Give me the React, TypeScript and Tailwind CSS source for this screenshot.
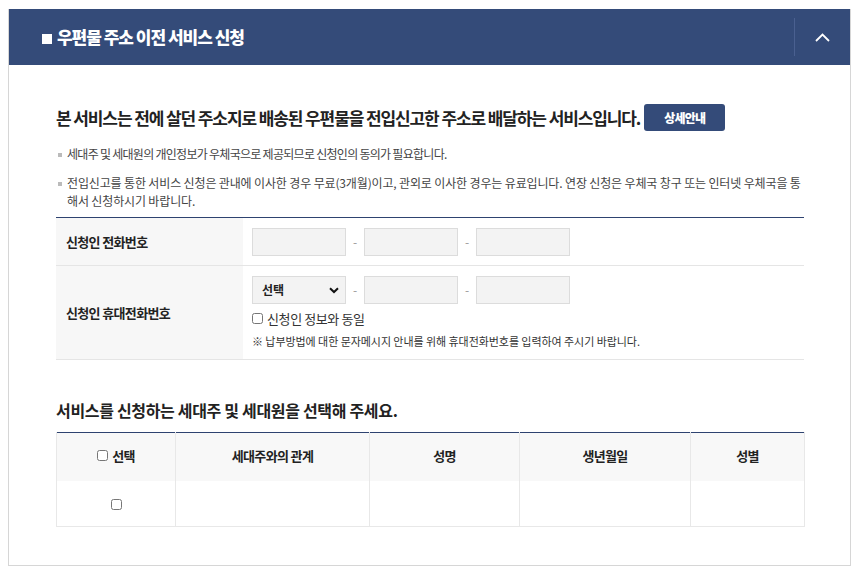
import React from "react";

const font = { fontFamily: '"Noto Sans CJK KR", "Noto Sans", sans-serif' };

function Input() {
  return <div className="w-[94px] h-[28px] bg-[#f3f3f3] border border-[#dcdcdc]" />;
}

function Dash() {
  return <span className="w-[18px] text-center text-[12px] text-[#999]">-</span>;
}

export default function App() {
  return (
    <div className="w-[859px] h-[576px] bg-white pt-[9px] pl-[8px]" style={font}>
      <div className="w-[843px] h-[557px] border border-[#d6d6d6] border-t-0 flex flex-col">
        {/* header */}
        <div className="h-[56px] bg-[#344b79] flex items-center">
          <div className="flex-1 flex items-center pl-[33px] text-white">
            <span className="w-[10px] h-[10px] bg-white mr-[5px] mt-[4px]" />
            <span className="text-[17px] font-black tracking-[-0.06em]">우편물 주소 이전 서비스 신청</span>
          </div>
          <div className="w-px h-[38px] bg-[#4a6090]" />
          <div className="w-[55px] flex items-center justify-center">
            <svg width="15" height="9" viewBox="0 0 15 9" fill="none">
              <path d="M1 8L7.5 1.5L14 8" stroke="white" strokeWidth="1.8" />
            </svg>
          </div>
        </div>

        {/* content */}
        <div className="pl-[47px] pr-[46px] pt-[39px]">
          <div className="flex items-center h-[27px]">
            <h2 className="text-[17px] font-bold text-[#222] tracking-[-0.065em]">
              본 서비스는 전에 살던 주소지로 배송된 우편물을 전입신고한 주소로 배달하는 서비스입니다.
            </h2>
            <button className="ml-[4px] w-[81px] h-[27px] rounded-[3px] bg-[#344b79] text-white text-[12px] font-black tracking-[-0.06em]">
              상세안내
            </button>
          </div>

          <ul className="mt-[14px] text-[12px] text-[#444] leading-[18px]">
            <li className="flex tracking-[-0.06em]">
              <span className="w-[4px] h-[4px] bg-[#bbb] mt-[8px] ml-[2px] mr-[5px] shrink-0" />
              <span>세대주 및 세대원의 개인정보가 우체국으로 제공되므로 신청인의 동의가 필요합니다.</span>
            </li>
            <li className="flex mt-[11px] tracking-[-0.012em]">
              <span className="w-[4px] h-[4px] bg-[#bbb] mt-[8px] ml-[2px] mr-[5px] shrink-0" />
              <span className="whitespace-nowrap">
                전입신고를 통한 서비스 신청은 관내에 이사한 경우 무료(3개월)이고, 관외로 이사한 경우는 유료입니다. 연장 신청은 우체국 창구 또는 인터넷 우체국을 통
                <br />
                해서 신청하시기 바랍니다.
              </span>
            </li>
          </ul>

          {/* form table */}
          <div className="mt-[7px] border-t border-[#2e4370]">
            <div className="flex h-[48px] border-b border-[#e5e5e5]">
              <div className="w-[187px] bg-[#f7f7f7] flex items-center pl-[10px] text-[13px] font-bold text-[#222] tracking-[-0.05em]">
                신청인 전화번호
              </div>
              <div className="flex items-center pl-[9px]">
                <Input />
                <Dash />
                <Input />
                <Dash />
                <Input />
              </div>
            </div>
            <div className="flex h-[94px] border-b border-[#e5e5e5]">
              <div className="w-[187px] bg-[#f7f7f7] flex items-center pl-[10px] text-[13px] font-bold text-[#222] tracking-[-0.05em]">
                신청인 휴대전화번호
              </div>
              <div className="flex flex-col pl-[9px] pt-[10px]">
                <div className="flex items-center">
                  <div className="relative w-[94px] h-[28px] bg-[#f3f3f3] border border-[#dcdcdc] flex items-center pl-[9px] text-[12px] font-bold text-[#222]">
                    선택
                    <svg className="absolute right-[6px] top-[10px]" width="10" height="7" viewBox="0 0 10 7" fill="none">
                      <path d="M1 1.2L5 5L9 1.2" stroke="#111" strokeWidth="2" />
                    </svg>
                  </div>
                  <Dash />
                  <Input />
                  <Dash />
                  <Input />
                </div>
                <label className="flex items-center mt-[5px] text-[13px] text-[#333] tracking-[-0.03em]">
                  <input type="checkbox" className="w-[11px] h-[11px] m-0 mr-[4px]" />
                  신청인 정보와 동일
                </label>
                <p className="mt-[4px] text-[11px] text-[#333] tracking-[-0.005em]">
                  ※ 납부방법에 대한 문자메시지 안내를 위해 휴대전화번호를 입력하여 주시기 바랍니다.
                </p>
              </div>
            </div>
          </div>

          <h3 className="mt-[39px] text-[16px] font-bold text-[#222] tracking-[-0.02em] leading-[22px]">
            서비스를 신청하는 세대주 및 세대원을 선택해 주세요.
          </h3>

          <table className="mt-[11px] w-[748px] border-collapse table-fixed text-[13px] text-[#222]">
            <colgroup>
              <col className="w-[119px]" />
              <col className="w-[194px]" />
              <col className="w-[150px]" />
              <col className="w-[171px]" />
              <col className="w-[114px]" />
            </colgroup>
            <thead>
              <tr className="h-[48px] bg-[#f8f8f8] border-t border-[#2e4370]">
                <th className="font-bold tracking-[-0.05em] border-l border-r border-[#e8e8e8] pb-[2px]">
                  <span className="inline-flex items-center">
                    <input type="checkbox" className="w-[11px] h-[11px] m-0 mr-[4px]" />
                    선택
                  </span>
                </th>
                <th className="font-bold tracking-[-0.05em] border-r border-[#e8e8e8] pb-[2px]">세대주와의 관계</th>
                <th className="font-bold tracking-[-0.05em] border-r border-[#e8e8e8] pb-[2px]">성명</th>
                <th className="font-bold tracking-[-0.05em] border-r border-[#e8e8e8] pb-[2px]">생년월일</th>
                <th className="font-bold tracking-[-0.05em] border-r border-[#e8e8e8] pb-[2px]">성별</th>
              </tr>
            </thead>
            <tbody>
              <tr className="h-[46px] border-b border-[#e8e8e8]">
                <td className="text-center border-l border-r border-[#e8e8e8]">
                  <input type="checkbox" className="w-[11px] h-[11px] m-0 align-middle" />
                </td>
                <td className="border-r border-[#e8e8e8]" />
                <td className="border-r border-[#e8e8e8]" />
                <td className="border-r border-[#e8e8e8]" />
                <td className="border-r border-[#e8e8e8]" />
              </tr>
            </tbody>
          </table>
        </div>
      </div>
    </div>
  );
}
